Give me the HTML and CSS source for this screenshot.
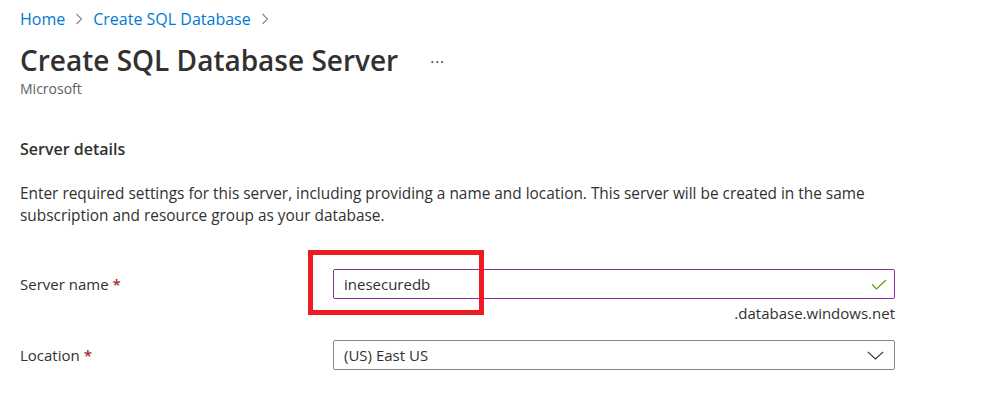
FILE: index.html
```html
<!DOCTYPE html>
<html lang="en">
<head>
<meta charset="utf-8">
<title>Create SQL Database Server</title>
<link rel="stylesheet" href="styles.css">
</head>
<body>
<div class="page">
  <nav class="crumbs">
    <a class="crumb" href="#">Home</a>
    <span class="sep"><svg width="8" height="12" viewBox="0 0 8 12"><path d="M1.5 1 L6.5 6 L1.5 11" fill="none" stroke="#8a8886" stroke-width="1.1"/></svg></span>
    <a class="crumb" href="#">Create SQL Database</a>
    <span class="sep"><svg width="8" height="12" viewBox="0 0 8 12"><path d="M1.5 1 L6.5 6 L1.5 11" fill="none" stroke="#8a8886" stroke-width="1.1"/></svg></span>
  </nav>
  <header class="head">
    <div class="title-row">
      <h1 class="title">Create SQL Database Server</h1>
      <span class="more">&middot;&middot;&middot;</span>
    </div>
    <div class="sub">Microsoft</div>
  </header>
  <section class="section">
    <h2 class="section-title">Server details</h2>
    <p class="desc">Enter required settings for this server, including providing a name and location. This server will be created in the same subscription and resource group as your database.</p>
    <div class="form">
      <div class="row">
        <label class="label">Server name <span class="req">*</span></label>
        <div class="field">
          <div class="input valid">
            <span class="value">inesecuredb</span>
            <svg class="ok" width="16" height="11" viewBox="0 0 16 11"><path d="M1 5.5 L5.5 10 L15 1" fill="none" stroke="#57a300" stroke-width="1.2"/></svg>
            <span class="highlight"></span>
          </div>
          <div class="suffix">.database.windows.net</div>
        </div>
      </div>
      <div class="row">
        <label class="label">Location <span class="req">*</span></label>
        <div class="field">
          <div class="input select">
            <span class="value">(US) East US</span>
            <svg class="chev" width="17" height="9" viewBox="0 0 17 9"><path d="M0.8 0.8 L8.5 8 L16.2 0.8" fill="none" stroke="#323130" stroke-width="1.1"/></svg>
          </div>
        </div>
      </div>
    </div>
  </section>
</div>
</body>
</html>
```
FILE: styles.css
```css
html, body {
  margin: 0;
  padding: 0;
  background: #ffffff;
}
body {
  font-family: "Segoe UI", "Open Sans", "Noto Sans", sans-serif;
  color: #323130;
}
.page {
  padding: 8px 20px 0 20px;
}
.crumbs {
  display: flex;
  align-items: center;
  height: 22px;
  font-size: 16px;
}
.crumb {
  color: #0078d4;
  text-decoration: none;
}
.sep {
  display: inline-flex;
  margin: 0 10px 0 10px;
}
.head {
  margin-top: 11px;
}
.title-row {
  display: flex;
  align-items: center;
  height: 38px;
}
.title {
  margin: 0;
  font-size: 28px;
  font-weight: 600;
  color: #323130;
  line-height: 38px;
}
.more {
  margin-left: 32px;
  font-size: 15px;
  letter-spacing: 1px;
  color: #323130;
  padding-top: 2px;
}
.sub {
  font-size: 14px;
  color: #605e5c;
  line-height: 20px;
  margin-top: 0;
}
.section {
  margin-top: 39px;
}
.section-title {
  margin: 0;
  font-size: 16px;
  font-weight: 600;
  line-height: 22px;
}
.desc {
  margin: 23px 0 0 0;
  font-size: 15.4px;
  line-height: 22px;
  max-width: 860px;
}
.form {
  margin-top: 42px;
  display: flex;
  flex-direction: column;
  gap: 17px;
}
.row {
  display: grid;
  grid-template-columns: 313px 562px;
  align-items: start;
}
.label {
  font-size: 15px;
  line-height: 30px;
}
.req {
  color: #a4262c;
  font-weight: 600;
}
.input {
  position: relative;
  box-sizing: border-box;
  height: 30px;
  border: 1px solid #8a8886;
  border-radius: 2px;
  display: flex;
  align-items: center;
  justify-content: space-between;
  padding: 0 7px 0 10px;
  font-size: 15px;
}
.input.valid {
  border-color: #8a2da5;
}
.highlight {
  position: absolute;
  left: -26px;
  top: -20px;
  width: 166px;
  height: 55px;
  border: 5px solid #ed1c24;
}
.suffix {
  text-align: right;
  font-size: 15px;
  line-height: 20px;
  margin-top: 4px;
}
.chev {
  margin-right: 3px;
}
```
